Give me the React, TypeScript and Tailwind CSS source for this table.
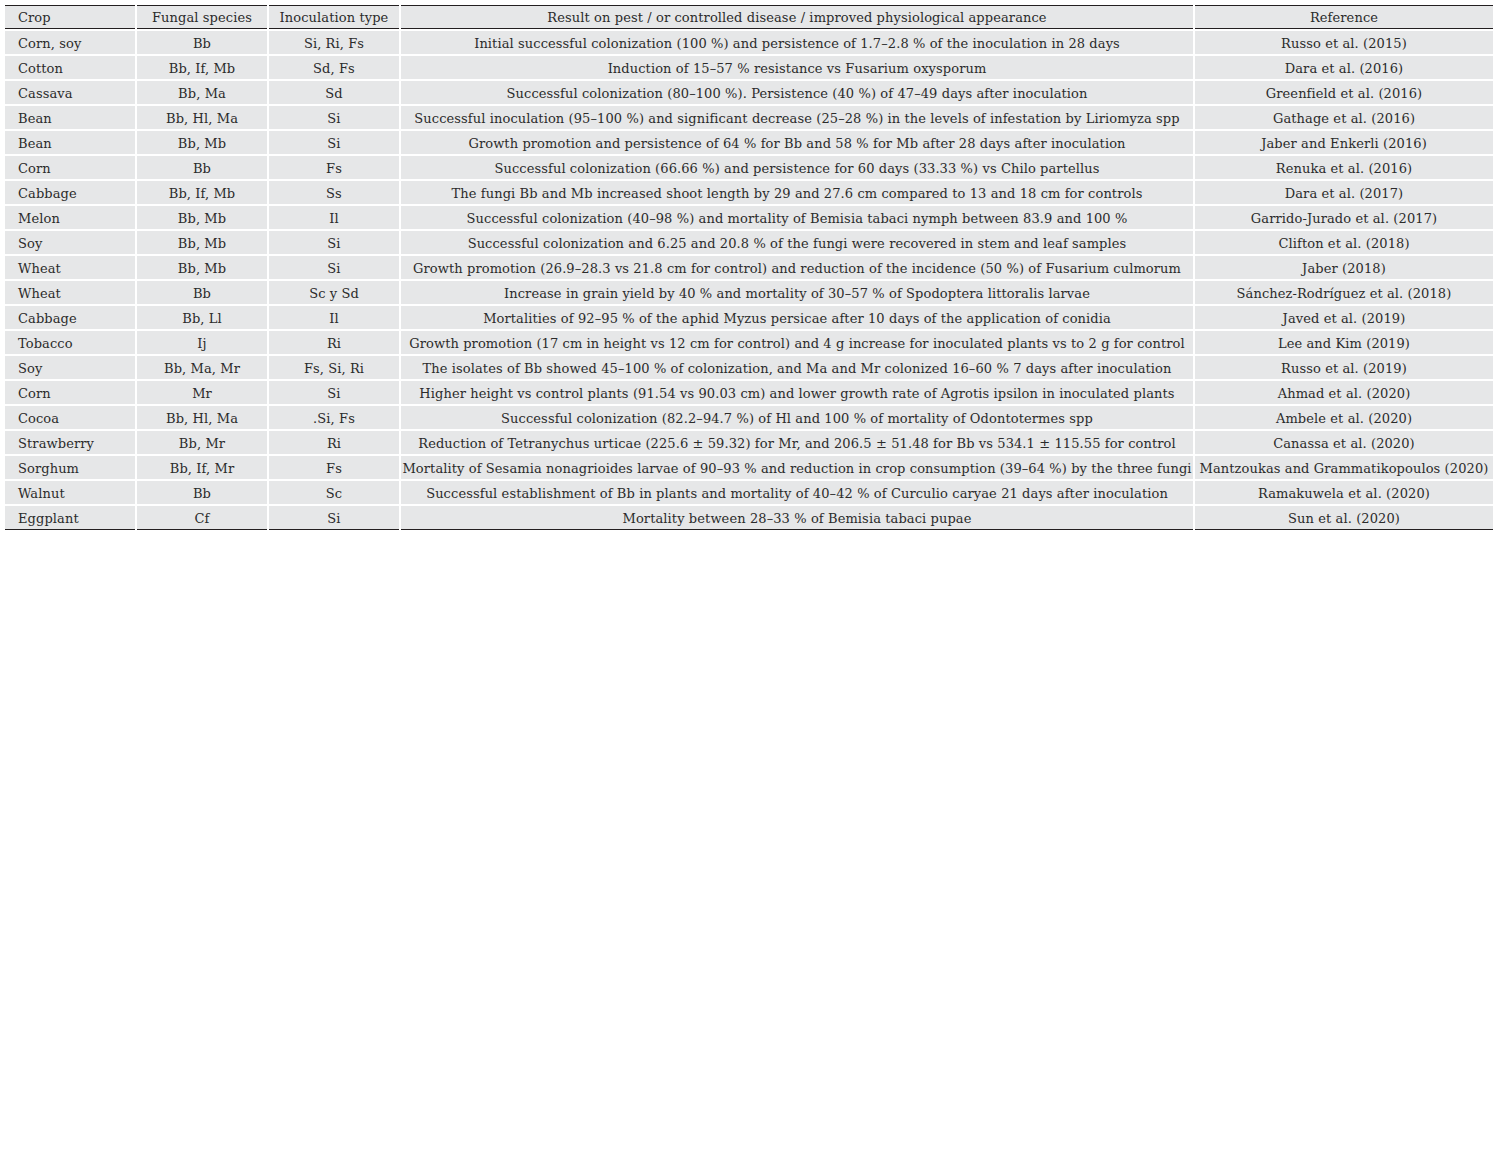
import React from 'react';

const rows: string[][] = [
  ['Corn, soy', 'Bb', 'Si, Ri, Fs', 'Initial successful colonization (100 %) and persistence of 1.7–2.8 % of the inoculation in 28 days', 'Russo et al. (2015)'],
  ['Cotton', 'Bb, If, Mb', 'Sd, Fs', 'Induction of 15–57 % resistance vs Fusarium oxysporum', 'Dara et al. (2016)'],
  ['Cassava', 'Bb, Ma', 'Sd', 'Successful colonization (80–100 %). Persistence (40 %) of 47–49 days after inoculation', 'Greenfield et al. (2016)'],
  ['Bean', 'Bb, Hl, Ma', 'Si', 'Successful inoculation (95–100 %) and significant decrease (25–28 %) in the levels of infestation by Liriomyza spp', 'Gathage et al. (2016)'],
  ['Bean', 'Bb, Mb', 'Si', 'Growth promotion and persistence of 64 % for Bb and 58 % for Mb after 28 days after inoculation', 'Jaber and Enkerli (2016)'],
  ['Corn', 'Bb', 'Fs', 'Successful colonization (66.66 %) and persistence for 60 days (33.33 %) vs Chilo partellus', 'Renuka et al. (2016)'],
  ['Cabbage', 'Bb, If, Mb', 'Ss', 'The fungi Bb and Mb increased shoot length by 29 and 27.6 cm compared to 13 and 18 cm for controls', 'Dara et al. (2017)'],
  ['Melon', 'Bb, Mb', 'Il', 'Successful colonization (40–98 %) and mortality of Bemisia tabaci nymph between 83.9 and 100 %', 'Garrido-Jurado et al. (2017)'],
  ['Soy', 'Bb, Mb', 'Si', 'Successful colonization and 6.25 and 20.8 % of the fungi were recovered in stem and leaf samples', 'Clifton et al. (2018)'],
  ['Wheat', 'Bb, Mb', 'Si', 'Growth promotion (26.9–28.3 vs 21.8 cm for control) and reduction of the incidence (50 %) of Fusarium culmorum', 'Jaber (2018)'],
  ['Wheat', 'Bb', 'Sc y Sd', 'Increase in grain yield by 40 % and mortality of 30–57 % of Spodoptera littoralis larvae', 'Sánchez-Rodríguez et al. (2018)'],
  ['Cabbage', 'Bb, Ll', 'Il', 'Mortalities of 92–95 % of the aphid Myzus persicae after 10 days of the application of conidia', 'Javed et al. (2019)'],
  ['Tobacco', 'Ij', 'Ri', 'Growth promotion (17 cm in height vs 12 cm for control) and 4 g increase for inoculated plants vs to 2 g for control', 'Lee and Kim (2019)'],
  ['Soy', 'Bb, Ma, Mr', 'Fs, Si, Ri', 'The isolates of Bb showed 45–100 % of colonization, and Ma and Mr colonized 16–60 % 7 days after inoculation', 'Russo et al. (2019)'],
  ['Corn', 'Mr', 'Si', 'Higher height vs control plants (91.54 vs 90.03 cm) and lower growth rate of Agrotis ipsilon in inoculated plants', 'Ahmad et al. (2020)'],
  ['Cocoa', 'Bb, Hl, Ma', '.Si, Fs', 'Successful colonization (82.2–94.7 %) of Hl and 100 % of mortality of Odontotermes spp', 'Ambele et al. (2020)'],
  ['Strawberry', 'Bb, Mr', 'Ri', 'Reduction of Tetranychus urticae (225.6 ± 59.32) for Mr, and 206.5 ± 51.48 for Bb vs 534.1 ± 115.55 for control', 'Canassa et al. (2020)'],
  ['Sorghum', 'Bb, If, Mr', 'Fs', 'Mortality of Sesamia nonagrioides larvae of 90–93 % and reduction in crop consumption (39–64 %) by the three fungi', 'Mantzoukas and Grammatikopoulos (2020)'],
  ['Walnut', 'Bb', 'Sc', 'Successful establishment of Bb in plants and mortality of 40–42 % of Curculio caryae 21 days after inoculation', 'Ramakuwela et al. (2020)'],
  ['Eggplant', 'Cf', 'Si', 'Mortality between 28–33 % of Bemisia tabaci pupae', 'Sun et al. (2020)'],
];

const headers = ['Crop', 'Fungal species', 'Inoculation type', 'Result on pest / or controlled disease / improved physiological appearance', 'Reference'];

export default function App() {
  return (
    <div className="min-h-[1165px] bg-white pt-[5px] pl-[5px] text-[13px] text-[#2b2b2b] font-['DejaVu_Serif',serif] tracking-[0.1px]">
      <div className="grid w-[1488px] grid-cols-[130px_130px_130px_792px_298px] gap-x-[2px] gap-y-[2px]">
        {headers.map((h, i) => (
          <div
            key={h}
            className={`flex h-[24px] items-center border-y border-[#231f20] bg-[#e6e7e8] pt-[1px] whitespace-nowrap ${i === 0 ? 'pl-[13px]' : 'justify-center'}`}
          >
            {h}
          </div>
        ))}
        {rows.map((r, ri) =>
          r.map((c, ci) => (
            <div
              key={`${ri}-${ci}`}
              className={`flex items-center bg-[#e6e7e8] pt-[2px] whitespace-nowrap ${ri === rows.length - 1 ? 'h-[24px] border-b border-[#231f20]' : 'h-[23px]'} ${ci === 0 ? 'pl-[13px]' : 'justify-center'}`}
            >
              {c}
            </div>
          ))
        )}
      </div>
    </div>
  );
}
